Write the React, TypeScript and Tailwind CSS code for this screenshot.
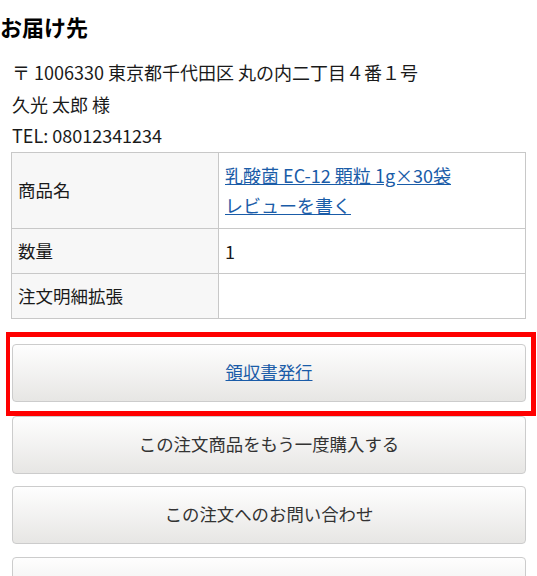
import React from "react";

const rows = [
    { label: "商品名", kind: "product" },
    { label: "数量", kind: "qty" },
    { label: "注文明細拡張", kind: "ext" },
];

const btnClass =
    "flex h-[58px] w-full items-center justify-center rounded-[4px] border border-[#cccccc] bg-gradient-to-b from-[#fefefe] to-[#e7e6e4] text-[17.4px] text-[#333333]";

const App = () => {
    return (
        <div
            className="min-h-screen bg-white text-[#1a1a1a]"
            style={{ fontFamily: '"Noto Sans CJK JP", "Noto Sans", sans-serif' }}
        >
            <h2 className="pt-[10px] text-[22px] font-bold leading-8 text-black">お届け先</h2>

            <div className="mt-[15px] px-[12px] text-[18px] leading-[31.5px]">
                <p>〒 1006330 東京都千代田区 丸の内二丁目４番１号</p>
                <p>久光 太郎 様</p>
                <p>TEL: 08012341234</p>
            </div>

            <div className="mx-[11px]">
                <table className="w-full border-collapse text-[18px] leading-8">
                    <tbody>
                        {rows.map((row) => (
                            <tr key={row.label}>
                                <th className="w-[207px] border border-[#c8c8c8] bg-[#f7f7f7] px-[6px] py-[6px] text-left text-[17.5px] font-normal">
                                    {row.label}
                                </th>
                                <td className="border border-[#c8c8c8] px-[6px] py-[6px]">
                                    {row.kind === "product" && (
                                        <div className="py-[1.5px] leading-[30px]">
                                            <a href="#" className="block w-fit text-[#1a5ca8] underline">
                                                乳酸菌 EC-12 顆粒 1g×30袋
                                            </a>
                                            <a href="#" className="block w-fit text-[#1a5ca8] underline">
                                                レビューを書く
                                            </a>
                                        </div>
                                    )}
                                    {row.kind === "qty" && "1"}
                                </td>
                            </tr>
                        ))}
                    </tbody>
                </table>
            </div>

            <div className="ml-[12px] mr-[11px] mt-[25px]">
                <div className="relative mb-[14px]">
                    <button className={btnClass}>
                        <span className="text-[#1a5ca8] underline">領収書発行</span>
                    </button>
                    <div className="pointer-events-none absolute -left-[6px] -right-[10px] -top-[12px] -bottom-[14px] border-[5px] border-l-4 border-[#ff0000]" />
                </div>
                <div className="mb-[12px]">
                    <button className={btnClass}>この注文商品をもう一度購入する</button>
                </div>
                <div className="mb-[13px]">
                    <button className={btnClass}>この注文へのお問い合わせ</button>
                </div>
                <div className="mb-[13px]">
                    <button className={btnClass} aria-label="その他" />
                </div>
            </div>
        </div>
    );
};

export default App;
